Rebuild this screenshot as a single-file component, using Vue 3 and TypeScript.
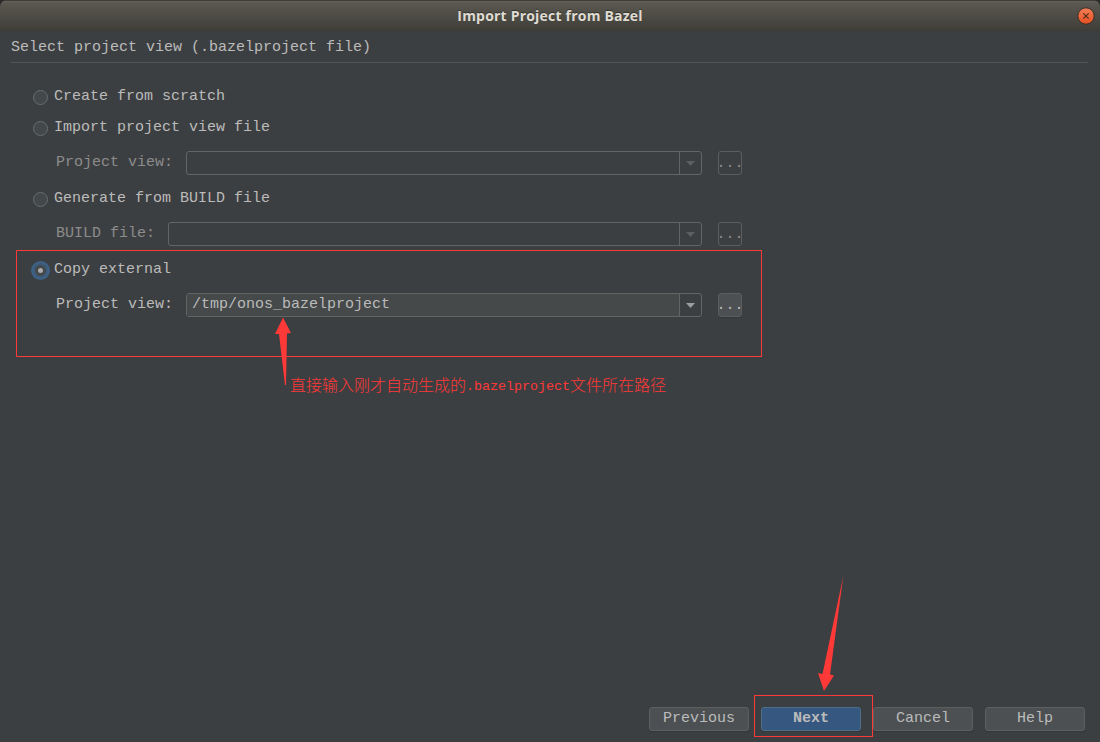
<script setup lang="ts">
import { ref } from 'vue'

interface Field {
  label: string
  value: string
}

interface Option {
  id: string
  title: string
  field?: Field
}

const selected = ref('copy')

const options: Option[] = [
  { id: 'scratch', title: 'Create from scratch' },
  { id: 'import', title: 'Import project view file', field: { label: 'Project view:', value: '' } },
  { id: 'generate', title: 'Generate from BUILD file', field: { label: 'BUILD file:', value: '' } },
  { id: 'copy', title: 'Copy external', field: { label: 'Project view:', value: '/tmp/onos_bazelproject' } },
]

const buttons = ['Previous', 'Next', 'Cancel', 'Help']
</script>

<template>
  <div class="window">
    <header class="titlebar">
      <span class="title">Import Project from Bazel</span>
      <svg class="close" viewBox="0 0 18 18" width="18" height="18">
        <defs>
          <linearGradient id="closeFill" x1="0" y1="0" x2="0" y2="1">
            <stop offset="0" stop-color="#f47e58" />
            <stop offset="1" stop-color="#e5501f" />
          </linearGradient>
        </defs>
        <circle cx="9" cy="9" r="8.2" fill="url(#closeFill)" stroke="#3a2f29" />
        <path d="M6.300 6.300 L11.700 11.700 M11.700 6.300 L6.300 11.700" stroke="#4b2d1b" stroke-width="1.1" />
      </svg>
    </header>

    <main class="content">
      <h1 class="heading">Select project view (.bazelproject file)</h1>

      <section
        v-for="option in options"
        :key="option.id"
        class="option"
        :class="{ active: option.id === selected }"
      >
        <div class="choice" @click="selected = option.id">
          <span class="radio"></span>
          <span>{{ option.title }}</span>
        </div>
        <div v-if="option.field" class="field">
          <span class="label">{{ option.field.label }}</span>
          <div class="combo">
            <span class="value">{{ option.field.value }}</span>
            <span class="drop">
              <svg viewBox="0 0 9 5" width="9" height="5"><path d="M0 0H9L4.500 5Z" fill="currentColor" /></svg>
            </span>
          </div>
          <span class="browse">...</span>
        </div>
      </section>
    </main>

    <footer class="actions">
      <button v-for="name in buttons" :key="name" class="button" :class="{ primary: name === 'Next' }">{{ name }}</button>
    </footer>

    <div class="mark mark-option"></div>
    <div class="mark mark-next"></div>
    <svg class="arrows" viewBox="0 0 1100 742" width="1100" height="742">
      <path d="M283 317.500L291 333L287 333.500L286 385H285L279 334L275 334Z" fill="#ff3838" />
      <path d="M843.300 576L830 674.500L834 675.500L824 691L818 673L822.500 674Z" fill="#ff3838" />
    </svg>
    <p class="note">直接输入刚才自动生成的<span class="latin">.bazelproject</span>文件所在路径</p>
  </div>
</template>

<style>
body {
  background: #2b2b2a;
}
</style>

<style scoped>
.window {
  position: relative;
  display: flex;
  flex-direction: column;
  box-sizing: border-box;
  width: 1100px;
  height: 742px;
  overflow: hidden;
  border-radius: 7px 7px 0 0;
  background: #3c3f41;
  color: #bbbbbb;
  font: 15px/20px "Liberation Mono", monospace;
}

.titlebar {
  flex: none;
  display: flex;
  align-items: center;
  justify-content: center;
  height: 31px;
  background: linear-gradient(#3f3d38 0, #3f3d38 1px, #65625a 1px, #5a5850 3px, #3f3e38 30px, #3b3a36 31px);
}

.title {
  color: #dfdbd2;
  font: bold 14px/20px "Open Sans", "Noto Sans", sans-serif;
  letter-spacing: 0.2px;
  text-shadow: 0 -1px #35342f;
}

.close {
  position: absolute;
  top: 7px;
  right: 5px;
}

.content {
  flex: 1;
  padding: 7px 12px 0 11px;
}

.heading {
  margin: 0 0 24px;
  height: 24px;
  border-bottom: 1px solid #555555;
  font: inherit;
}

.option {
  display: flex;
  flex-direction: column;
  padding-left: 22px;
}

.choice {
  display: flex;
  align-items: center;
  gap: 6px;
  height: 20px;
  margin-bottom: 11px;
}

.radio {
  display: flex;
  align-items: center;
  justify-content: center;
  box-sizing: border-box;
  width: 15px;
  height: 15px;
  margin-top: 1px;
  border: 1px solid #6b6d6d;
  border-radius: 50%;
  background: #43494a;
}

.active .radio {
  border-color: #3d6185;
  box-shadow: 0 0 0 2px #3d6185, inset 0 0 0 1px #3d6185;
}

.active .radio::after {
  width: 5px;
  height: 5px;
  border-radius: 50%;
  background: #a9abac;
  content: "";
}

.field {
  display: flex;
  width: 686px;
  height: 24px;
  margin: 2px 0 14px 23px;
}

.label {
  line-height: 23px;
  margin-right: 13px;
  color: #8c8c8c;
}

.combo {
  flex: 1;
  display: flex;
  box-sizing: border-box;
  margin-right: 16px;
  border: 1px solid #646464;
  border-radius: 3px;
}

.value {
  flex: 1;
  padding-left: 5px;
  line-height: 21px;
}

.drop {
  display: flex;
  align-items: center;
  justify-content: center;
  width: 21px;
  border-left: 1px solid #646464;
  color: #5c5e60;
}

.browse {
  display: flex;
  justify-content: center;
  box-sizing: border-box;
  width: 24px;
  border: 1px solid #5b5d5e;
  border-radius: 3px;
  color: #8c8c8c;
  line-height: 23px;
}

.active .label,
.active .browse {
  color: #bbbbbb;
}

.active .value {
  background: #45494a;
}

.active .drop {
  color: #9b9d9e;
}

.active .browse {
  background: #4c5052;
  box-shadow: 0 1px 1px #343638;
}

.actions {
  display: flex;
  justify-content: flex-end;
  gap: 12px;
  padding: 0 15px 11px 0;
}

.button {
  box-sizing: border-box;
  width: 100px;
  height: 24px;
  padding: 0 0 1px;
  border: 1px solid #5e6060;
  border-radius: 3px;
  background: #4c5052;
  box-shadow: 0 1px 1px #343638;
  color: #bbbbbb;
  font: 15px/21px "Liberation Mono", monospace;
}

.primary {
  border-color: #4c708c;
  background: #365880;
  font-weight: bold;
}

.mark {
  position: absolute;
  box-sizing: border-box;
  border: 1px solid #ff3838;
}

.mark-option {
  left: 16px;
  top: 250px;
  width: 746px;
  height: 107px;
}

.mark-next {
  left: 754px;
  top: 695px;
  width: 119px;
  height: 42px;
}

.arrows {
  position: absolute;
  inset: 0;
  pointer-events: none;
}

.note {
  position: absolute;
  left: 290px;
  top: 374px;
  margin: 0;
  color: #ff3838;
  font: 300 16px/20px "Noto Sans CJK SC", sans-serif;
  white-space: nowrap;
}

.latin {
  position: relative;
  top: -1px;
  font: 13.33px/20px "Liberation Mono", monospace;
}
</style>
